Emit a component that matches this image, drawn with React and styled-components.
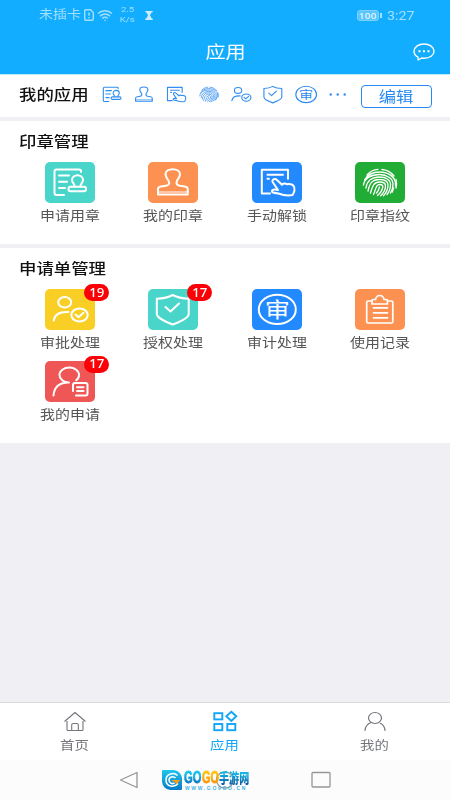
import React from 'react'
import styled, { createGlobalStyle } from 'styled-components';


const GlobalStyle = createGlobalStyle`
  * {
    box-sizing: border-box;
  }

  body {
    margin: 0;
    font-family: "Noto Sans", "Noto Sans CJK SC", sans-serif;
    background: #efeff4;
  }
`;

const Screen = styled.div`
  width: 450px;
  height: 800px;
  display: flex;
  flex-direction: column;
  overflow: hidden;
  background: #efeff4;
`;

const Wide = styled.span`
  display: inline-block;
  white-space: nowrap;
  line-height: 1;
  transform: scale(${props => props.$x || 1.15}, 1);
  transform-origin: ${props => props.$origin || 'center'};
`;

const Header = styled.header`
  height: 75px;
  flex: none;
  background: #12adff;
  border-bottom: 1px solid #bfe9f3;
  color: #fff;
`;

const StatusBar = styled.div`
  height: 30px;
  padding: 0 36px 0 39px;
  display: flex;
  align-items: center;
  color: #a3dfff;
  font-size: 12.5px;
`;

const Carrier = styled.div`
  width: 45px;
  display: flex;
`;

const Speed = styled.div`
  width: 15px;
  margin: 0 10px 0 7px;
  display: flex;
  flex-direction: column;
  align-items: center;
  gap: 1.5px;
  font-family: Roboto, sans-serif;
  font-size: 8px;
`;

const Battery = styled.div`
  width: 22px;
  height: 11px;
  margin-left: auto;
  border-radius: 3px;
  background: #58c5ff;
  border: 1px solid #7dd2ff;
  color: #d5f1ff;
  font-size: 9px;
  font-weight: 600;
  display: flex;
  align-items: center;
  justify-content: center;
`;

const BatteryTip = styled.div`
  width: 2px;
  height: 5px;
  margin: 0 5px 0 1px;
  background: #a3dfff;
`;

const Clock = styled.div`
  width: 27px;
  font-size: 13px;
  font-family: Roboto, sans-serif;
`;

const TitleBar = styled.div`
  height: 44px;
  padding: 0 15px;
  display: grid;
  grid-template-columns: 1fr auto 1fr;
  align-items: center;
  font-size: 17.5px;

  svg {
    grid-column: 3;
    justify-self: end;
  }
`;

const PageTitle = styled.h1`
  grid-column: 2;
  margin: 0;
  font-size: inherit;
  font-weight: 400;
  display: flex;
`;

const MyApps = styled.section`
  height: 42px;
  flex: none;
  padding: 0 18px 3px 19px;
  display: flex;
  align-items: center;
  background: #fff;
  font-size: 14.5px;
  color: #111;
`;

const MyAppsLabel = styled.div`
  width: 78.5px;
  display: flex;
  font-weight: 500;
`;

const Shortcuts = styled.div`
  display: flex;
  gap: 4.4px;
  color: #318df0;

  svg {
    width: 28px;
    height: 23px;
  }
`;

const EditButton = styled.button`
  width: 71px;
  height: 23px;
  margin-left: auto;
  margin-top: 3px;
  padding: 0;
  display: flex;
  align-items: center;
  justify-content: center;
  background: #fff;
  border: 1.5px solid #2489f2;
  border-radius: 4px;
  color: #2489f2;
  font: inherit;
  font-size: 15px;
`;

const Panel = styled.section`
  height: ${props => props.$height}px;
  flex: none;
  margin-top: 4px;
  padding: 0 18.4px;
  background: #fff;
`;

const PanelTitle = styled.h2`
  height: 41px;
  margin: 0 0 0 0.6px;
  display: flex;
  align-items: center;
  font-size: 14.5px;
  font-weight: 500;
  color: #111;
`;

const Grid = styled.div`
  display: grid;
  grid-template-columns: 103.4px 103.2px 103.2px 103.8px;
  grid-auto-rows: 71.5px;
`;

const AppItem = styled.div`
  display: flex;
  flex-direction: column;
  align-items: center;
  gap: 6px;
  font-size: 13px;
  color: #555;
`;

const Tile = styled.div`
  position: relative;
  width: 50px;
  height: 41px;
  border-radius: 5px;
  background: ${props => props.$color};
  color: #fff;

  svg {
    display: block;
  }
`;

const Badge = styled.span`
  position: absolute;
  top: -5px;
  left: 39px;
  width: 25px;
  height: 17px;
  border-radius: 9px;
  background: #fb0007;
  color: #fff;
  font-size: 12px;
  font-weight: 500;
  display: flex;
  align-items: center;
  justify-content: center;
`;

const TabBar = styled.nav`
  height: 58px;
  flex: none;
  margin-top: auto;
  border-top: 1px solid #d9d9dc;
  display: grid;
  grid-template-columns: repeat(3, 1fr);
  background: #fff;
`;

const Tab = styled.div`
  padding-top: 7px;
  display: flex;
  flex-direction: column;
  align-items: center;
  gap: 7px;
  font-size: 12.5px;
  color: ${props => (props.$active ? '#12a5f8' : '#73757a')};
`;

const SystemNav = styled.div`
  position: relative;
  height: 40px;
  flex: none;
  display: flex;
  align-items: center;
  justify-content: center;
  gap: 76px;
  padding-right: 1px;
  background: #fcfcfc;
`;

const Watermark = styled.div`
  position: absolute;
  left: 162px;
  top: 10px;
  display: flex;
  gap: 2px;
`;

const BrandName = styled.div`
  height: 16px;
  display: flex;
  align-items: center;
  font-family: "Liberation Sans", "Noto Sans CJK SC", sans-serif;
  font-weight: 900;
`;

const BrandWord = styled.div`
  width: ${props => props.$width}px;
  display: flex;
  font-size: ${props => props.$size}px;

  span {
    color: transparent;
    background: linear-gradient(180deg, ${props => props.$from} 20%, ${props => props.$to} 90%);
    -webkit-background-clip: text;
    background-clip: text;
    -webkit-text-stroke: ${props => props.$stroke || 0}px transparent;
  }
`;

const BrandUrl = styled.div`
  padding-left: 1px;
  font-family: "Liberation Sans", sans-serif;
  font-size: 5px;
  line-height: 5px;
  font-weight: 700;
  letter-spacing: 1.65px;
  color: #3fb2e2;
`;

const glyphProps = {
  width: 50,
  height: 41,
  viewBox: '0 0 50 41',
  fill: 'none',
  stroke: 'currentColor',
  strokeWidth: 2,
  strokeLinecap: 'round',
  strokeLinejoin: 'round',
};

const ApplyIcon = () => (
  <svg {...glyphProps}>
    <path d="M36 10V9q0-1.500-2-1.500H11.500q-2 0-2 2V31q0 2 2 2H19M14 13.500h10M14 19.700h8M14 26h6" />
    <path d="M29.500 24.500c1-2-2.500-3.500-2.500-6.500 0-3 2.500-4.800 5.500-4.800s5.500 1.800 5.500 4.800c0 3-3.500 4.500-2.500 6.500" />
    <rect x="23.500" y="24.700" width="17.500" height="4.500" rx="2" />
  </svg>
);

const StampIcon = () => (
  <svg {...glyphProps}>
    <path d="M10 32.500V27q0-2 3-2.500l5-.8c3-.5 4-2 2.500-5-1.300-2-3-4-3-6.500 0-3 3-5 7.200-5s7.300 2 7.300 5c0 2.500-2 4.500-3 6.500-1.300 3 0 4.500 2.700 5l5 .8q3 .5 3 2.500v5.500z" />
    <path d="M10 30h30" strokeWidth="1.200" />
  </svg>
);

const HandIcon = () => (
  <svg {...glyphProps}>
    <path strokeLinecap="butt" d="M36 17.500V7.700H9.800v23.800h9M14.700 12.800h17M14.700 16.700h3" />
    <path d="M26 28l-5.200-7.700c-1.500-2.600 2-4.600 4.200-2.300l5 4.700c1.500-1.300 3.500-1.300 5-.5 3-.4 6 .3 7 2.500 1.200 3 .4 5.500-1.500 8.300-5.500 1.200-10 0-14-1.500-3-.3-6-.8-6.500-2-.5-1.800 2-2.600 6-1.500" />
  </svg>
);

const FingerprintIcon = () => (
  <svg {...glyphProps} strokeWidth="1.350">
    <path d="M12 13c3-3.500 7-5.300 11-5.600M27 7.500c5 .4 9 2.800 12 6.500M9.500 18c3-5 8-8 15-8 9 0 16 5 16 12v2M8.500 23c1-7 8-10.500 16-10.500 7.500 0 13.500 4 13.500 9.500 0 4-.8 6.500-2.500 9M11 26c.8-7 6-11 13.500-11 6.500 0 11 3 11 7.500 0 4-1.500 7.500-3.500 10M13 29c1.500-7 3.500-11.500 11.500-11.500 5.300 0 8.500 2 8.500 5.500 0 4-2 8-4.500 10.700M15.500 31c1.700-5.500 2.500-11 9-11 3.800 0 6 1.300 6 3.700 0 3.500-2 7.300-4.800 10M18.500 32.500c2-3.500 2-10 6-10 2.600 0 3.500.8 3.300 2.300-.5 3-2.300 6.200-5.300 8.700M21.500 31c2-2 2.500-4 3-6" />
    <path d="M41 17.500c.8 3 .8 5.500 0 8.500M38.500 26l-1.200 4" />
  </svg>
);

const ApproveIcon = () => (
  <svg {...glyphProps}>
    <ellipse cx="19.700" cy="13.300" rx="6.500" ry="5.200" />
    <path d="M8.700 31.500C9.500 26 13 22.500 23.500 23" />
    <ellipse cx="34.500" cy="26" rx="8.200" ry="6.500" />
    <path d="M30.500 25.500l3 2.800 5-4.500" />
  </svg>
);

const ShieldIcon = () => (
  <svg {...glyphProps}>
    <path d="M24.700 6C20 8.500 14 9.500 8.800 9.800V25c0 3.500 9 8 15.900 10.500C31.500 33 40.700 28.500 40.700 25V9.800C35.500 9.500 29.500 8.500 24.700 6z" />
    <path d="M17.500 18l5 4.500 8.500-8" />
  </svg>
);

const AuditIcon = () => (
  <svg {...glyphProps}>
    <ellipse cx="25.300" cy="20.400" rx="18.500" ry="14.700" />
    <text
      x="0"
      y="0"
      transform="translate(25.300 28.300) scale(1.200 1)"
      textAnchor="middle"
      fontSize="21"
      fontWeight="400"
      fill="currentColor"
      stroke="none"
    >
      审
    </text>
  </svg>
);

const ClipboardIcon = () => (
  <svg {...glyphProps} strokeWidth="1.700">
    <path d="M17 12h-4q-1.300 0-1.300 1.300v19.400q0 1.300 1.300 1.300h23.500q1.300 0 1.300-1.300V13.300q0-1.300-1.300-1.300h-4M18.500 18.800h14M18.500 23.800h14M18.500 28.800h14" />
    <path d="M17 15v-3q0-1.500 1.500-1.500h2c.5-2.500 2-4 4.300-4s3.800 1.500 4.200 4h2q1.500 0 1.500 1.500v3z" />
  </svg>
);

const RequestIcon = () => (
  <svg {...glyphProps}>
    <path d="M8.500 34.500c.5-7.500 5-13 15.500-13-5.500 0-9.500-3.300-9.500-7.500s4.300-7.500 9.800-7.500S34 9.800 34 14c0 2-1 4-2.700 5.300" />
    <path d="M28 30v-6q0-2 2-2h10.500q2 0 2 2v8.500q0 2-2 2H31M32 26.300h6.500M32 30h6.500" />
  </svg>
);

const MoreIcon = () => (
  <svg {...glyphProps} fill="currentColor" stroke="none">
    <circle cx="12" cy="20.500" r="2.100" />
    <circle cx="24.500" cy="20.500" r="2.100" />
    <circle cx="37" cy="20.500" r="2.100" />
  </svg>
);

const shortcuts = [
  ApplyIcon,
  StampIcon,
  HandIcon,
  FingerprintIcon,
  ApproveIcon,
  ShieldIcon,
  AuditIcon,
  MoreIcon,
];

const sealApps = [
  { name: '申请用章', color: '#4ad5cb', Icon: ApplyIcon },
  { name: '我的印章', color: '#fd9151', Icon: StampIcon },
  { name: '手动解锁', color: '#2389ff', Icon: HandIcon },
  { name: '印章指纹', color: '#21ad35', Icon: FingerprintIcon },
];

const formApps = [
  { name: '审批处理', color: '#f9cf25', Icon: ApproveIcon, count: 19 },
  { name: '授权处理', color: '#4ad5cb', Icon: ShieldIcon, count: 17 },
  { name: '审计处理', color: '#2389ff', Icon: AuditIcon },
  { name: '使用记录', color: '#fd9151', Icon: ClipboardIcon },
  { name: '我的申请', color: '#ef5656', Icon: RequestIcon, count: 17 },
];

const AppGrid = ({ apps }) => (
  <Grid>
    {apps.map(({ name, color, Icon, count }) => (
      <AppItem key={name}>
        <Tile $color={color}>
          <Icon />
          {count && <Badge><Wide $x={1.1}>{count}</Wide></Badge>}
        </Tile>
        <Wide>{name}</Wide>
      </AppItem>
    ))}
  </Grid>
);

const App = () => {
  return (
    <Screen>
      <GlobalStyle />
      <Header>
        <StatusBar>
          <Carrier><Wide $origin="left" $x={1.12}>未插卡</Wide></Carrier>
          <svg width="10" height="12" viewBox="0 0 10 12" fill="none" stroke="currentColor" strokeWidth="1.400">
            <path d="M.7 2q0-1.300 1.300-1.300h4.500l2.800 2.800V10q0 1.300-1.300 1.300H2Q.7 11.300.7 10zM5 3.500v3.300M5 8v1.300" />
          </svg>
          <svg width="19" height="13" viewBox="0 0 19 13" fill="none" stroke="currentColor" strokeWidth="1.500">
            <path d="M4 4.500c4-3.700 10-3.700 14 0M6 7.100c3-2.700 7-2.700 10 0M8.200 9.400c1.700-1.500 3.900-1.500 5.600 0" />
            <circle cx="11" cy="11.300" r=".8" fill="currentColor" stroke="none" />
          </svg>
          <Speed>
            <Wide $x={1.2}>2.5</Wide>
            <Wide $x={1.2}>K/s</Wide>
          </Speed>
          <svg width="8" height="9" viewBox="0 0 8 9" fill="#c9edff">
            <path d="M.3 0h7.400v1.300h-.9L4.900 4.300l1.900 3.200h.9V9H.3V7.500h.9l1.900-3.200L1.200 1.300H.3z" />
          </svg>
          <Battery><Wide $x={1.15}>100</Wide></Battery>
          <BatteryTip />
          <Clock><Wide $origin="left" $x={1.1}>3:27</Wide></Clock>
        </StatusBar>
        <TitleBar>
          <PageTitle><Wide>应用</Wide></PageTitle>
          <svg width="22" height="18" viewBox="0 0 22 18" fill="none" stroke="currentColor" strokeWidth="1.400" strokeLinejoin="round">
            <path d="M11 1C5.300 1 1 4.200 1 8.200c0 2.500 1.500 4.600 4 5.900l.2 2.900 3.400-2c.8.200 1.600.2 2.400.2 5.700 0 10-3 10-7S16.700 1 11 1z" />
            <path d="M5.500 8.300h2M10 8.300h2M14.500 8.300h2" strokeWidth="2" />
          </svg>
        </TitleBar>
      </Header>

      <MyApps>
        <MyAppsLabel><Wide $origin="left" $x={1.2}>我的应用</Wide></MyAppsLabel>
        <Shortcuts>
          {shortcuts.map((Icon, i) => <Icon key={i} />)}
        </Shortcuts>
        <EditButton><Wide>编辑</Wide></EditButton>
      </MyApps>

      <Panel $height={123}>
        <PanelTitle><Wide $origin="left" $x={1.2}>印章管理</Wide></PanelTitle>
        <AppGrid apps={sealApps} />
      </Panel>
      <Panel $height={195}>
        <PanelTitle><Wide $origin="left" $x={1.2}>申请单管理</Wide></PanelTitle>
        <AppGrid apps={formApps} />
      </Panel>

      <TabBar>
        <Tab>
          <svg width="24" height="23" viewBox="0 0 24 23" fill="none" stroke="currentColor" strokeWidth="1.100" strokeLinejoin="round">
            <path d="M1.500 11.500L12 2.500l10.500 9M4 11v8.500q0 1 1 1h14q1 0 1-1V11M8.700 20.500V15q0-1.500 1.500-1.500h3.600q1.500 0 1.500 1.500v5.500" />
          </svg>
          <Wide>首页</Wide>
        </Tab>
        <Tab $active>
          <svg width="26" height="23" viewBox="0 0 26 23" fill="none" stroke="currentColor" strokeWidth="1.900">
            <rect x="2.300" y="3.200" width="8" height="6.200" />
            <rect x="2.300" y="14" width="8" height="6.200" />
            <rect x="15.300" y="14" width="8" height="6.200" />
            <path d="M19.300 1.700l5 4.600-5 4.600-5-4.600z" />
          </svg>
          <Wide>应用</Wide>
        </Tab>
        <Tab>
          <svg width="24" height="23" viewBox="0 0 24 23" fill="none" stroke="currentColor" strokeWidth="1.200" strokeLinecap="round">
            <ellipse cx="12" cy="8" rx="6.500" ry="5.500" />
            <path d="M2 20.500c.3-4 2.500-6.800 6-8M22 20.500c-.3-3.500-2-6-4.700-7.200" />
          </svg>
          <Wide>我的</Wide>
        </Tab>
      </TabBar>

      <SystemNav>
        <svg width="20" height="18" viewBox="0 0 20 18" fill="none" stroke="#969696" strokeWidth="1.300" strokeLinejoin="round">
          <path d="M18 1.500v15L1.500 9z" />
        </svg>
        <svg width="20" height="18" viewBox="0 0 20 18" fill="none" stroke="#969696" strokeWidth="1.300">
          <ellipse cx="10" cy="9" rx="8.500" ry="8" />
        </svg>
        <svg width="20" height="18" viewBox="0 0 20 18" fill="none" stroke="#969696" strokeWidth="1.300">
          <rect x="1" y="1.500" width="18" height="14.500" rx="1" />
        </svg>
        <Watermark>
          <svg width="20" height="20" viewBox="0 0 20 20" fill="none">
            <defs>
              <linearGradient id="drop" x1="0" y1="0" x2="0" y2="1">
                <stop offset="0" stopColor="#20c5ec" />
                <stop offset="1" stopColor="#087bc8" />
              </linearGradient>
            </defs>
            <path d="M1 0h10c5 0 9 4 9 9v10q0 1-1 1H9c-5 0-9-4-9-9V1q0-1 1-1z" fill="url(#drop)" />
            <path d="M15.500 5.500C12 2 4 3.500 4 10c0 7 8.500 8 12 3.500" stroke="#fff" strokeWidth="1.500" />
            <path d="M13.500 8C11 5.500 7 7 7 10s3 4.500 5.500 3" stroke="#fff" strokeWidth="1.500" />
            <path d="M9 10h9l-3.500 4.500-1.500-2.300z" fill="#ff9d16" />
          </svg>
          <div>
            <BrandName>
              <BrandWord $width={17.5} $size={16} $stroke={0.8} $from="#15c3ee" $to="#0a6ab8">
                <Wide $origin="left" $x={0.7}>GO</Wide>
              </BrandWord>
              <BrandWord $width={17} $size={16} $stroke={0.8} $from="#ffc00c" $to="#fb8a00">
                <Wide $origin="left" $x={0.68}>GO</Wide>
              </BrandWord>
              <BrandWord $width={31} $size={14} $from="#15b5e6" $to="#075da9">
                <Wide $origin="left" $x={0.72}>手游网</Wide>
              </BrandWord>
            </BrandName>
            <BrandUrl>WWW.GO9GO.CN</BrandUrl>
          </div>
        </Watermark>
      </SystemNav>
    </Screen>
  )
}

export default App
